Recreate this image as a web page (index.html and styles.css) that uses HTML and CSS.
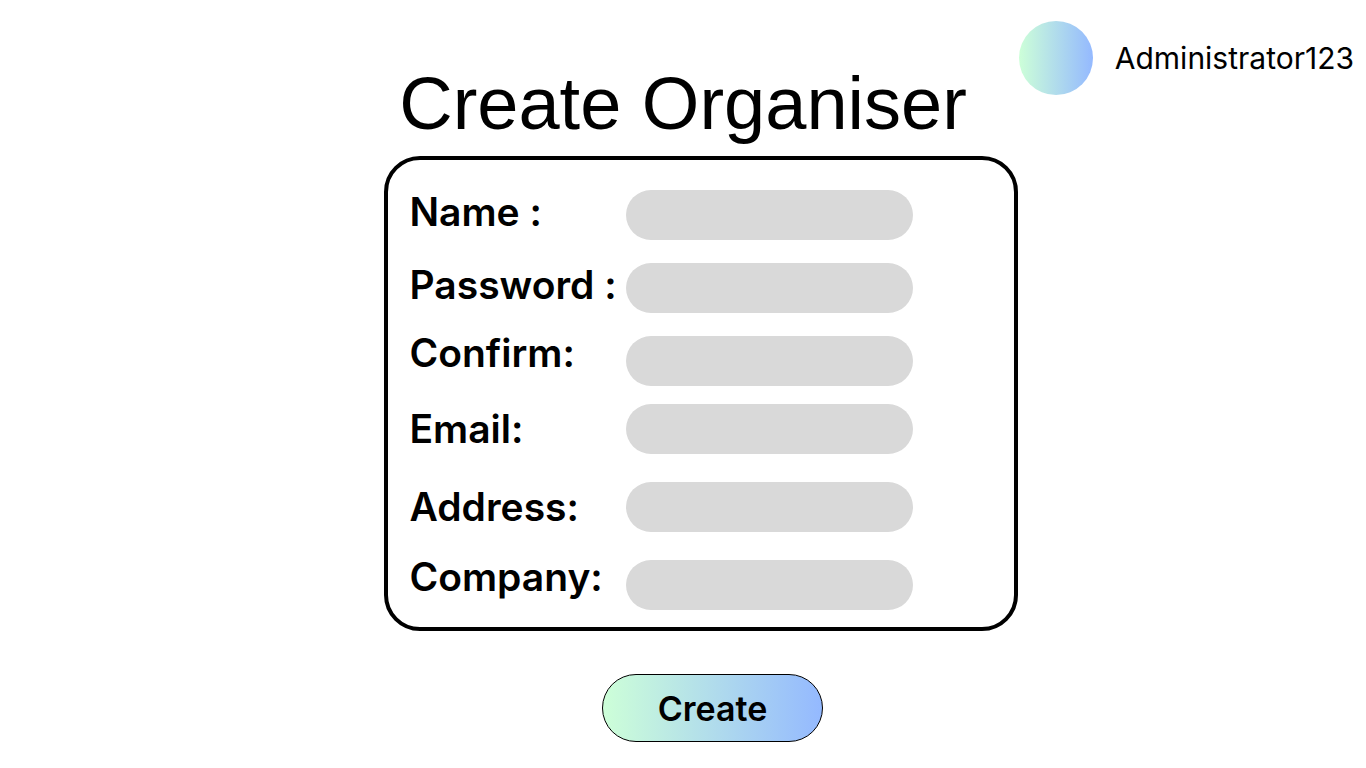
FILE: index.html
```html
<!DOCTYPE html>
<html lang="en">
<head>
<meta charset="utf-8">
<meta name="viewport" content="width=device-width, initial-scale=1">
<title>Create Organiser</title>
<link rel="stylesheet" href="styles.css">
</head>
<body>
<header class="account">
  <span class="avatar"></span>
  <span class="username">Administrator123</span>
</header>
<main class="page">
  <h1 class="title">Create Organiser</h1>
  <form class="form">
    <div class="panel">
      <div class="group group-credentials">
        <div class="row label-raised"><label for="name">Name :</label><input id="name" type="text"></div>
        <div class="row label-raised"><label for="password">Password :</label><input id="password" type="password"></div>
        <div class="row label-high"><label for="confirm">Confirm:</label><input id="confirm" type="password"></div>
      </div>
      <div class="group group-contact">
        <div class="row"><label for="email">Email:</label><input id="email" type="email"></div>
        <div class="row"><label for="address">Address:</label><input id="address" type="text"></div>
        <div class="row label-high"><label for="company">Company:</label><input id="company" type="text"></div>
      </div>
    </div>
    <button class="create" type="submit">Create</button>
  </form>
</main>
</body>
</html>
```
FILE: styles.css
```css
* {
  box-sizing: border-box;
}

body {
  margin: 0;
  background: #fff;
  color: #000;
  font-family: Inter, "Liberation Sans", sans-serif;
}

.account {
  position: absolute;
  top: 21px;
  right: 12px;
  display: flex;
  align-items: center;
  gap: 22px;
}

.avatar {
  width: 74px;
  height: 74px;
  border-radius: 50%;
  background: linear-gradient(90deg, #cdffd8, #94b9ff);
}

.username {
  font-size: 30px;
}

.page {
  display: flex;
  flex-direction: column;
  align-items: center;
  padding-top: 62px;
}

.title {
  margin: 0 0 10px;
  font: 400 74px/84px "Liberation Sans", Arial, sans-serif;
}

.form {
  display: flex;
  flex-direction: column;
  align-items: center;
  gap: 43px;
  padding-left: 35px;
}

.panel {
  display: flex;
  flex-direction: column;
  gap: 18px;
  padding: 30px 101px 17px 22px;
  border: 4px solid #000;
  border-radius: 36px;
}

.group {
  display: flex;
  flex-direction: column;
}

.group-credentials {
  gap: 23px;
}

.group-contact {
  gap: 28px;
}

.row {
  display: grid;
  grid-template-columns: 216px 287px;
  align-items: center;
}

.row label {
  font-size: 39px;
  font-weight: 600;
  line-height: 34px;
  white-space: nowrap;
}

.label-raised label {
  padding-bottom: 6px;
}

.label-high label {
  padding-bottom: 16px;
}

.row input {
  width: 100%;
  height: 50px;
  padding: 0 24px;
  border: 0;
  border-radius: 25px;
  background: #d9d9d9;
  font: inherit;
  font-size: 24px;
}

.create {
  width: 221px;
  height: 68px;
  margin-left: 24px;
  border: 1px solid #000;
  border-radius: 34px;
  background: linear-gradient(90deg, #cdffd8, #94b9ff);
  color: #000;
  font: inherit;
  font-size: 34px;
  font-weight: 600;
}
```
